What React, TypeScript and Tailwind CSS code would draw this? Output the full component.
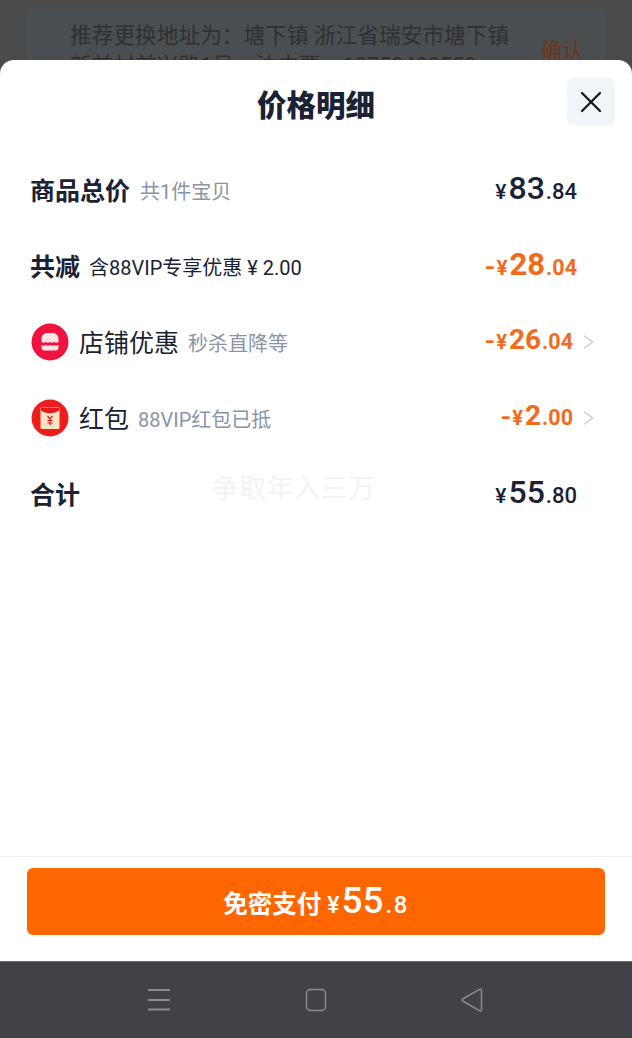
import React from "react";
import { X } from "lucide-react";

const font = "font-['Roboto','Noto_Sans_CJK_SC',sans-serif]";

type AmountProps = {
  minus?: boolean;
  whole: string;
  cents: string;
  small?: boolean;
};

const Amount: React.FC<AmountProps> = ({ minus, whole, cents, small }) => {
  let wholeSize = "text-[32px]";
  if (minus) wholeSize = small ? "text-[28px]" : "text-[31px]";

  return (
    <div
      className={`flex items-baseline leading-none -mt-[4px] ${
        minus ? "text-[#f26a1b] font-bold" : "text-[#1a2233] font-medium"
      }`}
    >
      {minus && <span className="inline-block text-[24px] mr-[1px] scale-x-[1.15] origin-right">-</span>}
      <span className={minus ? "text-[20px] mr-[2px]" : "text-[21px] mr-[2px]"}>¥</span>
      <span className={wholeSize}>{whole}</span>
      <span className={minus ? "text-[21.500px] ml-[1px]" : "text-[22px] ml-[1px]"}>.{cents}</span>
    </div>
  );
};

const Chevron = () => (
  <svg width="11" height="16" viewBox="0 0 11 16" fill="none" stroke="#cccccc" strokeWidth="1.500" className="ml-[10px] mr-[1px]">
    <path d="M1 1.500l8.500 6.500-8.500 6.500" />
  </svg>
);

const ShopIcon = () => (
  <svg width="38" height="38" viewBox="0 0 38 38">
    <circle cx="19" cy="19" r="18.500" fill="#f0123f" />
    <path
      d="M10.500 16c0-3.500 2.500-6 5.500-6h6c3 0 5.500 2.500 5.500 6v3c-1.500 1-2.800 1-4.200 0-1.400 1-2.900 1-4.300 0-1.400 1-2.900 1-4.300 0-1.400 1-2.700 1-4.200 0z"
      fill="#fde4e6"
    />
    <path
      d="M10.500 22c1.500 1 2.800 1 4.200 0 1.400 1 2.900 1 4.300 0 1.400 1 2.900 1 4.300 0 1.400 1 2.700 1 4.200 0v2c0 2-1 3.500-3 3.500H13.500c-2 0-3-1.500-3-3.500z"
      fill="#fde4e6"
    />
  </svg>
);

const PacketIcon = () => (
  <svg width="38" height="38" viewBox="0 0 38 38">
    <circle cx="19" cy="19" r="18.500" fill="#ee1c1c" />
    <rect x="9.500" y="8" width="19" height="22" rx="1.500" fill="#fbe3c4" />
    <path d="M10 8.500h18v3c-5 3.500-13 3.500-18 0z" fill="#e8171b" />
    <path
      d="M16.500 17l2.500 3 2.500-3M19 20v6M16.500 21.500h5M16.500 24h5"
      stroke="#e8171b"
      strokeWidth="1.200"
      fill="none"
    />
  </svg>
);

const App: React.FC = () => {
  return (
    <div className={`${font} w-[632px] h-[1038px] flex flex-col overflow-hidden bg-[#4b4b4b]`}>
      <div className="h-[60px] shrink-0 px-[27px] pt-[8px] overflow-hidden">
        <div className="h-[80px] bg-[#4b4e51] rounded-md pl-[43px] pr-[22px] flex items-center justify-between">
          <div className="self-start pt-[13px] w-[450px] text-[21.700px] leading-[30px] text-[#2e3033] whitespace-nowrap">
            <div>推荐更换地址为：塘下镇 浙江省瑞安市塘下镇</div>
            <div>新前村前兴路1号，沈中贾，18758488558</div>
          </div>
          <span className="text-[21px] text-[#6e3514] mt-[6px]">确认</span>
        </div>
      </div>

      <div className="relative flex-1 flex flex-col bg-white rounded-t-[14px]">
        <div className="h-[92px] shrink-0 relative flex items-center justify-center">
          <h1 className="text-[29.500px] font-black text-[#1a2233] leading-none pt-[2px]">价格明细</h1>
          <button className="absolute left-[567px] top-[18px] w-[48px] h-[47px] rounded-md bg-[#f1f4f8] flex items-center justify-center">
            <X size={36} strokeWidth={1.500} className="text-[#14181f]" />
          </button>
        </div>

        <div className="pl-[30px] pr-[37px]">
          <div className="h-[76px] flex items-center justify-between pr-[18px]">
            <div className="flex items-center pt-[4px]">
              <span className="text-[25px] font-bold text-[#1a2233]">商品总价</span>
              <span className="ml-[10px] text-[20px] text-[#8a94a6]">共1件宝贝</span>
            </div>
            <Amount whole="83" cents="84" />
          </div>

          <div className="h-[76px] flex items-center justify-between pr-[18px]">
            <div className="flex items-center pt-[4px]">
              <span className="text-[25px] font-bold text-[#1a2233]">共减</span>
              <span className="ml-[9px] text-[20px] text-[#1a2233]">含88VIP专享优惠 ¥ 2.00</span>
            </div>
            <Amount minus whole="28" cents="04" />
          </div>

          <div className="h-[76px] flex items-center justify-between">
            <div className="flex items-center">
              <div className="ml-[1px]">
                <ShopIcon />
              </div>
              <div className="flex items-center pt-[4px]">
                <span className="ml-[10px] text-[25px] text-[#1a2233]">店铺优惠</span>
                <span className="ml-[9px] text-[20px] text-[#8a94a6]">秒杀直降等</span>
              </div>
            </div>
            <div className="flex items-center">
              <Amount minus small whole="26" cents="04" />
              <Chevron />
            </div>
          </div>

          <div className="h-[76px] flex items-center justify-between">
            <div className="flex items-center">
              <div className="ml-[1px]">
                <PacketIcon />
              </div>
              <div className="flex items-center pt-[4px]">
                <span className="ml-[10px] text-[25px] text-[#1a2233]">红包</span>
                <span className="ml-[9px] text-[20px] text-[#8a94a6]">88VIP红包已抵</span>
              </div>
            </div>
            <div className="flex items-center">
              <Amount minus small whole="2" cents="00" />
              <Chevron />
            </div>
          </div>

          <div className="h-[76px] flex items-center justify-between pr-[18px]">
            <span className="text-[25px] font-bold text-[#1a2233] pt-[4px]">合计</span>
            <Amount whole="55" cents="80" />
          </div>
        </div>

        <div className="absolute left-[212px] top-[412px] text-[27.200px] leading-[34px] text-[#f3f3f3] whitespace-nowrap">
          争取年入三万
        </div>

        <div className="mt-auto h-[105px] border-t border-[#f0f0f0] px-[27px] pt-[11px]">
          <button className="w-full h-[67px] rounded-md bg-[#ff6600] text-white font-bold flex items-baseline justify-center pt-[14px] leading-none">
            <span className="text-[24.500px]">免密支付</span>
            <span className="ml-[6px] text-[23px] font-medium">¥</span>
            <span className="ml-[2px] text-[37px] font-medium">55</span>
            <span className="ml-[2px] text-[24px] font-medium tracking-[1.500px]">.8</span>
          </button>
        </div>
      </div>

      <div className="h-[77px] shrink-0 bg-[#414247] border-t border-[#6b6c70] flex items-center justify-center gap-[133px]">
        <svg width="24" height="24" viewBox="0 0 24 24" fill="none" stroke="#8b8c90" strokeWidth="1.800">
          <path d="M1 2h22M1 12h22M1 21.500h22" />
        </svg>
        <svg width="24" height="24" viewBox="0 0 24 24" fill="none" stroke="#8b8c90" strokeWidth="1.500">
          <rect x="2.500" y="1.500" width="19" height="21" rx="4" />
        </svg>
        <svg width="24" height="24" viewBox="0 0 24 24" fill="none" stroke="#8b8c90" strokeWidth="1.500">
          <path d="M20.500 2v20a1 1 0 0 1-1.500 .8L1.500 13a1.200 1.200 0 0 1 0-2L19 1.200A1 1 0 0 1 20.500 2z" />
        </svg>
      </div>
    </div>
  );
};

export default App;
